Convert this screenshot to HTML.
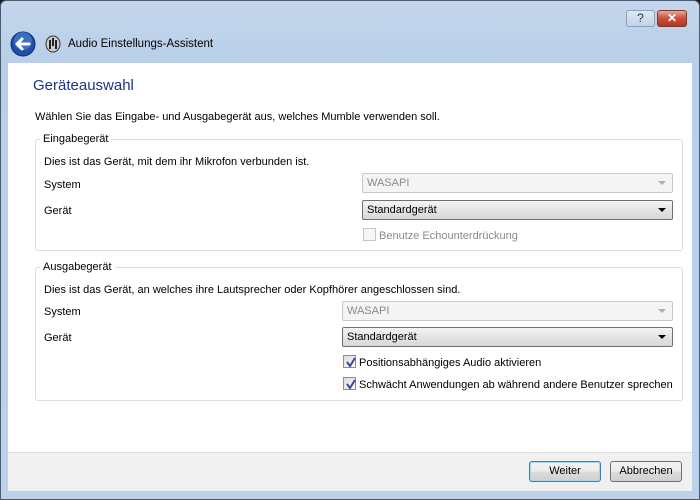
<!DOCTYPE html>
<html><head><meta charset="utf-8"><style>
*{box-sizing:border-box;margin:0;padding:0}
body{width:700px;height:500px;overflow:hidden;background:#1a1a1a;font-family:"Liberation Sans",sans-serif;font-size:11px;color:#000;position:relative}
.frame{position:absolute;left:0;top:0;width:700px;height:500px;border-radius:6px 6px 0 0;background:linear-gradient(#c4d6ec,#b9cfe8 60px,#bcd2ea);border:1px solid #4a5a70}
.abs{position:absolute;white-space:nowrap}
.white{position:absolute;left:8px;top:63px;width:684px;height:389px;background:#fff}
.foot{position:absolute;left:8px;top:452px;width:684px;height:39px;background:#f0f0f0;border-top:1px solid #dfdfdf}
.gb{position:absolute;border:1px solid #d5dfe5;border-radius:3px}
.gt{position:absolute;background:#fff;padding:0 3px}
.combo{position:absolute;height:20px;border:1px solid #707070;border-radius:2px;background:linear-gradient(#f4f4f4,#e4e4e4 50%,#d8d8d8);padding:3px 4px;font-size:11px}
.combo.dis{border-color:#c8c8c8;background:#f4f4f4;color:#8a8a8a}
.combo:after{content:"";position:absolute;right:6px;top:7px;border:4px solid transparent;border-top:4px solid #000;border-bottom:0}
.combo.dis:after{border-top-color:#b0b0b0}
.cb{position:absolute;width:13px;height:13px;border:1px solid #8f8f8f;background:linear-gradient(135deg,#dcdcdc,#fafafa)}
.cb.dis{border-color:#c5c5c5;background:#f6f6f6}
.cb svg{position:absolute;left:1px;top:1px}
.btn{position:absolute;height:21px;border:1px solid #707070;border-radius:3px;background:linear-gradient(#f2f2f2,#ebebeb 50%,#dddddd 50%,#cfcfcf);text-align:center;line-height:19px}
</style></head><body>
<div class="frame"></div>
<div class="abs" style="left:626px;top:10px;width:29px;height:17px;border:1px solid #8aa0bb;border-radius:3px;background:linear-gradient(#dfe8f3,#c2d3e7);text-align:center;font-size:12px;line-height:15px;color:#333">?</div>
<div class="abs" style="left:657px;top:10px;width:30px;height:17px;border:1px solid #7a3a32;border-radius:3px;background:linear-gradient(#e9a793,#c9503a 50%,#b8341f);text-align:center;font-size:12px;font-weight:bold;line-height:15px;color:#fff">✕</div>
<svg class="abs" style="left:10px;top:31px" width="26" height="26" viewBox="0 0 26 26"><circle cx="13" cy="13" r="12" fill="#1f4fa8" stroke="#0e2f6c"/><circle cx="13" cy="10" r="9" fill="#4f86d6" opacity=".6"/><path d="M19 13H8M12 8l-5 5 5 5" stroke="#fff" stroke-width="3" fill="none" stroke-linecap="round" stroke-linejoin="round"/></svg>
<svg class="abs" style="left:45px;top:35px" width="16" height="18" viewBox="0 0 16 18"><ellipse cx="8" cy="9" rx="7" ry="8" fill="#ccc" stroke="#333"/><rect x="4" y="5" width="2" height="9" fill="#222"/><rect x="10" y="5" width="2" height="9" fill="#222"/><rect x="7" y="3" width="2" height="8" fill="#222"/></svg>
<div class="abs" style="left:68px;top:38px;font-size:11.5px">Audio Einstellungs-Assistent</div>
<div class="white"></div>
<div class="foot"></div>
<div class="abs" style="left:33px;top:77px;font-size:15px;color:#1e3287">Geräteauswahl</div>
<div class="abs" style="left:35px;top:111px">Wählen Sie das Eingabe- und Ausgabegerät aus, welches Mumble verwenden soll.</div>

<div class="gb" style="left:35px;top:139px;width:648px;height:112px"></div>
<div class="gt" style="left:40px;top:133px">Eingabegerät</div>
<div class="abs" style="left:44px;top:156px">Dies ist das Gerät, mit dem ihr Mikrofon verbunden ist.</div>
<div class="abs" style="left:44px;top:179px">System</div>
<div class="abs" style="left:44px;top:205px">Gerät</div>
<div class="combo dis" style="left:362px;top:173px;width:311px">WASAPI</div>
<div class="combo" style="left:362px;top:200px;width:311px">Standardgerät</div>
<div class="cb dis" style="left:363px;top:228px"></div>
<div class="abs" style="left:379px;top:230px;color:#8a8a8a">Benutze Echounterdrückung</div>

<div class="gb" style="left:35px;top:267px;width:648px;height:134px"></div>
<div class="gt" style="left:40px;top:261px">Ausgabegerät</div>
<div class="abs" style="left:44px;top:284px">Dies ist das Gerät, an welches ihre Lautsprecher oder Kopfhörer angeschlossen sind.</div>
<div class="abs" style="left:44px;top:306px">System</div>
<div class="abs" style="left:44px;top:332px">Gerät</div>
<div class="combo dis" style="left:342px;top:301px;width:331px">WASAPI</div>
<div class="combo" style="left:342px;top:327px;width:331px">Standardgerät</div>
<div class="cb" style="left:343px;top:355px"><svg width="11" height="11"><path d="M2 5l3 4 5-8" stroke="#3a4a9a" stroke-width="2" fill="none"/></svg></div>
<div class="abs" style="left:359px;top:357px">Positionsabhängiges Audio aktivieren</div>
<div class="cb" style="left:343px;top:377px"><svg width="11" height="11"><path d="M2 5l3 4 5-8" stroke="#3a4a9a" stroke-width="2" fill="none"/></svg></div>
<div class="abs" style="left:359px;top:379px">Schwächt Anwendungen ab während andere Benutzer sprechen</div>

<div class="btn" style="left:529px;top:461px;width:72px;border-color:#3c7fb1;box-shadow:0 0 0 1px #a8d8f0 inset">Weiter</div>
<div class="btn" style="left:610px;top:461px;width:72px">Abbrechen</div>
</body></html>
